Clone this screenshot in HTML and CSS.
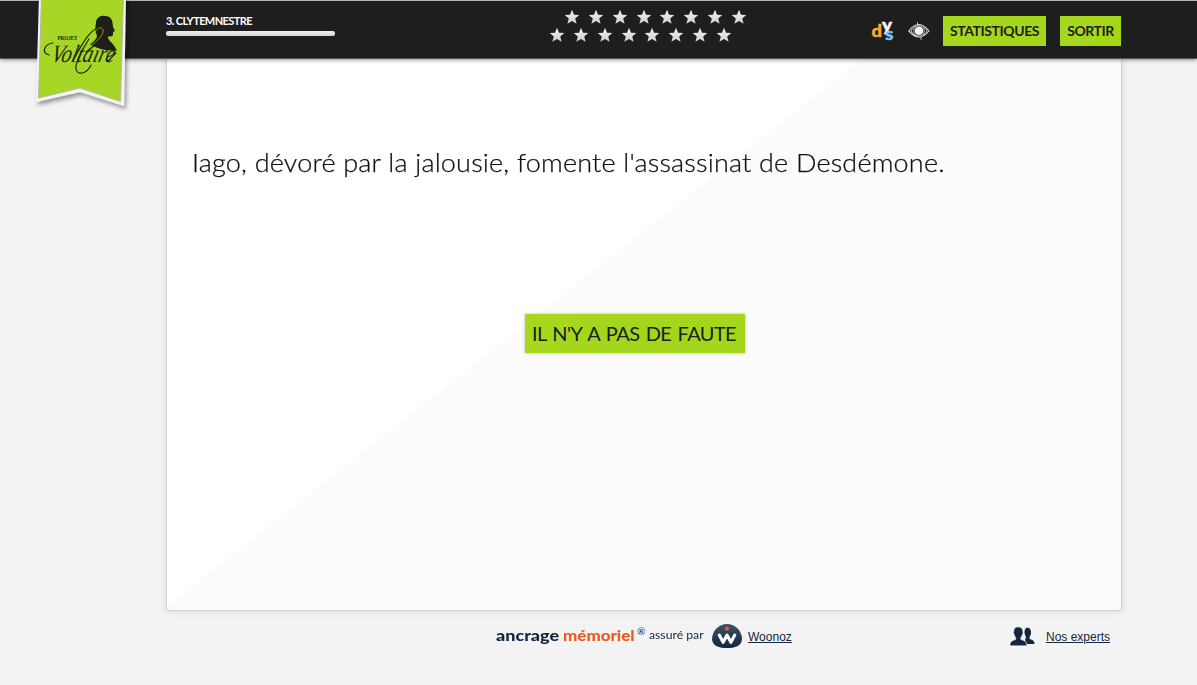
FILE: index.html
```html
<!DOCTYPE html>
<html lang="fr">
<head>
<meta charset="utf-8">
<title>Projet Voltaire</title>
<link rel="stylesheet" href="styles.css">
</head>
<body>
<svg class="defs" width="0" height="0" aria-hidden="true">
  <defs>
    <linearGradient id="silver" x1="0" y1="0" x2="0" y2="1"><stop offset="0" stop-color="#f2f2f2"/><stop offset="1" stop-color="#cfcfcf"/></linearGradient>
    <symbol id="star" viewBox="0 0 16 16"><path fill="url(#silver)" d="M8 .7 10 5.800 15.300 6.100 11.200 9.600 12.600 14.800 8 11.900 3.400 14.800 4.800 9.600 .7 6.100 6 5.800Z"/></symbol>
  </defs>
</svg>
<header class="topbar">
  <a class="brand" href="#" aria-label="Projet Voltaire">
    <svg width="102" height="114" viewBox="0 0 102 114">
      <defs>
        <pattern id="hatch" width="4" height="4" patternUnits="userSpaceOnUse"><path d="M-1 1 1 -1M0 4 4 0M3 5 5 3" stroke="#b7e04b" stroke-width=".8"/></pattern>
        <filter id="drop" x="-20%" y="-20%" width="140%" height="140%"><feDropShadow dx="2" dy="3" stdDeviation="2" flood-opacity=".4"/></filter>
      </defs>
      <path filter="url(#drop)" fill="#f4f4f4" d="M9-5H96L94 105 50 91 6 101Z"/>
      <path fill="#a2d512" stroke="#b4b8ae" d="M11.500-5H93.500L90.500 100.500 50 87 8.500 97Z"/>
      <path fill="url(#hatch)" d="M12-5H93L90 100 50 87 9 97Z"/>
      <path fill="#1d1f18" d="M66 22c0-5 4-8 9-7 5 0 7 3 7.500 7l.5 4 2 4-2 1v2c0 2-1 2.500-5 2.500-1 3 5 6 9 14-8 1-18-1-27-6 4-3 7-6 7-9-2-3-2-8-1-12.500Z"/>
      <text class="brand-small" x="27.500" y="38.500" textLength="20" lengthAdjust="spacingAndGlyphs">PROJET</text>
      <text class="brand-script" x="24" y="61" textLength="63" lengthAdjust="spacingAndGlyphs" transform="translate(11.500) skewX(-14)">Voltaire</text>
      <g fill="none" stroke="#1d2a0c" stroke-width="1.200" stroke-linecap="round">
        <path d="M19 54C11 52 14 43 23 42"/>
        <path d="M43 59C50 48 59 28 70 26c8 0 2 14-14 25"/>
        <path d="M59 38C53 48 45 60 46 68c1 7 11 5 15-4M78 60 86 52"/>
      </g>
      <path fill="none" stroke="#8fb320" stroke-width=".8" d="M65 31c2-3 4-5 6-4 6 2-1 12-12 19"/>
    </svg>
  </a>
  <div class="level">
    <div class="level-name">3. CLYTEMNESTRE</div>
    <div class="level-bar"></div>
  </div>
  <div class="stars">
    <div class="star-row star-row-top"><svg><use href="#star"/></svg><svg><use href="#star"/></svg><svg><use href="#star"/></svg><svg><use href="#star"/></svg><svg><use href="#star"/></svg><svg><use href="#star"/></svg><svg><use href="#star"/></svg><svg><use href="#star"/></svg></div>
    <div class="star-row"><svg><use href="#star"/></svg><svg><use href="#star"/></svg><svg><use href="#star"/></svg><svg><use href="#star"/></svg><svg><use href="#star"/></svg><svg><use href="#star"/></svg><svg><use href="#star"/></svg><svg><use href="#star"/></svg></div>
  </div>
  <nav class="tools">
    <svg class="dys" viewBox="0 0 24 24"><text x=".5" y="16" fill="#f6ae2d" stroke="#f6ae2d" textLength="10.500" lengthAdjust="spacingAndGlyphs">d</text><text x="11" y="9.500" fill="#fff" stroke="#fff" textLength="10" lengthAdjust="spacingAndGlyphs">y</text><text x="14" y="19" fill="#7cc4f5" stroke="#7cc4f5" textLength="8.500" lengthAdjust="spacingAndGlyphs">s</text></svg>
    <svg class="eye" viewBox="0 0 22 18"><g fill="none" stroke="#d8d8d8"><path d="M.8 9C5 3 8 2.500 11 2.500S17 4 21 9c-4 4.500-7 6-10 6S5 13.500.8 9Z" stroke-width="1.100"/><circle cx="11" cy="8.800" r="5.300" stroke-width=".8"/><path stroke-width=".9" d="M3 9c2-3 3-4 5-5M3 9c2 3 3 4 5 5M9.500 3V.2M13 15v2.800M19 9c-1-2-2-3-4-4M19 9c-1 2-2 3-4 4"/></g><circle cx="11" cy="8.800" r="4.300" fill="#f4f4f4"/></svg>
    <a class="btn btn-stats" href="#"><span>STATISTIQUES</span></a>
    <a class="btn btn-exit" href="#"><span>SORTIR</span></a>
  </nav>
</header>
<main class="card">
  <p class="sentence">Iago, dévoré par la jalousie, fomente l'assassinat de Desdémone.</p>
  <button class="btn btn-answer"><span>IL N'Y A PAS DE FAUTE</span></button>
</main>
<footer class="footer">
  <div class="anchor">
    <span class="ancrage">ancrage</span><span class="memoriel">mémoriel</span><span class="reg">®</span><span class="assure">assuré par</span>
    <svg class="woonoz-logo" viewBox="0 0 32 26"><defs><linearGradient id="navy" x1="0" y1="0" x2="0" y2="1"><stop offset="0" stop-color="#3d526c"/><stop offset="1" stop-color="#14253d"/></linearGradient></defs><path fill="url(#navy)" d="M15.500.5C24 .5 31 8 31 16c0 7-8 9.500-15.500 9.500S0 23 0 16C0 8 7 .5 15.500.5Z"/><path d="M7.500 12 11.500 19.500 15.500 12 19.500 19.500 23.500 12" fill="none" stroke="#fff" stroke-width="3.200" stroke-linejoin="round" stroke-linecap="round"/><circle cx="15.500" cy="5.500" r="2.200" fill="#ea5b20"/></svg>
    <a class="link link-woonoz" href="#">Woonoz</a>
  </div>
  <div class="experts">
    <svg class="people" viewBox="0 0 25 19"><g fill="#14263f"><path d="M16 1c3-1 5.500 1 5 5 0 2-1 3-1.500 4v2c3 1 5 1.500 5 5H17l-2-4 1-3c-2-3-2-7 0-9Z"/><path stroke="#f2f2f2" stroke-width=".5" d="M3.800 5C3.500 1.500 5.500 0 8.300 0s4.800 1.500 4.500 5c.5 1 0 2-.5 2.500-.3 1.500-1 2.500-1.500 3v2c3 1 6 1.500 6 6.200H0C0 14 3 13.500 5.800 12.500v-2c-.8-.6-1.300-1.500-1.500-3-.7-.5-1-1.500-.5-2.500Z"/></g></svg>
    <a class="link" href="#">Nos experts</a>
  </div>
</footer>
</body>
</html>
```
FILE: styles.css
```css
* { box-sizing: border-box; }
body {
  margin: 0;
  height: 685px;
  overflow: hidden;
  background: #f3f3f3;
  font-family: Lato, "Noto Sans", sans-serif;
}
.defs { position: absolute; }
.topbar {
  position: relative;
  z-index: 1;
  display: flex;
  align-items: flex-start;
  height: 59px;
  background: #1e1e1e;
  border-top: 1px solid #b3b7b3;
  border-bottom: 1px solid #555;
  box-shadow: 0 1px 4px rgba(0, 0, 0, .45);
}
.brand {
  position: absolute;
  left: 30px;
  top: 0;
}
.brand svg { display: block; overflow: visible; }
.brand-small { font: 700 7px "Liberation Serif", serif; fill: #1d2a0c; }
.brand-script { font: italic 25px "Liberation Serif", serif; fill: #1d2a0c; }
.level { width: 169px; margin: 13px 0 0 166px; }
.level-name {
  height: 15px;
  color: #fff;
  font-size: 11px;
  font-weight: 700;
  line-height: 13px;
  letter-spacing: -.6px;
  white-space: nowrap;
}
.level-bar {
  height: 5px;
  margin-top: 2px;
  border-radius: 2px;
  background: linear-gradient(#ececec, #d6d6d6);
}
.stars { margin: 8px 0 0 214px; }
.star-row { display: flex; gap: 7.860px; height: 18px; }
.star-row svg { width: 16px; height: 16px; }
.star-row-top { padding-left: 15px; }
.tools { display: flex; margin: 15px 0 0 auto; padding-right: 76px; }
.dys { width: 24px; height: 24px; margin-top: 5px; overflow: visible; }
.dys text { font: 900 16px Lato, sans-serif; stroke-width: .4px; }
.eye { width: 22px; height: 18px; margin: 6px 13px 0 13px; }
.btn {
  display: flex;
  align-items: center;
  justify-content: center;
  padding: 0;
  border: 0;
  color: #1d1d1b;
  background: repeating-linear-gradient(135deg, #a2d512 0 2.100px, #abda2b 2.100px 2.830px);
  font-family: Lato, "Noto Sans", sans-serif;
  text-decoration: none;
  white-space: nowrap;
}
.btn-stats, .btn-exit { height: 30px; padding-bottom: 2px; font-size: 14px; font-weight: 700; }
.btn-stats { width: 103px; margin-right: 14px; letter-spacing: -.4px; }
.btn-exit { width: 61px; letter-spacing: -.5px; }
.card {
  width: 956px;
  height: 553px;
  margin: -1px 0 0 166px;
  border: 1px solid #d2d2d2;
  background: linear-gradient(141.800deg, #fff 0 42%, #fbfbfb 42.100%);
  box-shadow: 0 0 7px rgba(0, 0, 0, .12);
}
.sentence {
  width: max-content;
  margin: 0 0 0 25px;
  padding-top: 88px;
  color: #111;
  font-size: 25.500px;
  font-weight: 300;
  line-height: 30px;
  letter-spacing: .180px;
  white-space: nowrap;
  transform: scaleX(1.059);
  transform-origin: left;
  -webkit-text-stroke: .25px #111;
}
.btn-answer {
  width: 220px;
  height: 39px;
  margin: 137px 0 0 358px;
  padding: 0 2px 2px 0;
  font-size: 20px;
  letter-spacing: -.6px;
  word-spacing: 1.800px;
  box-shadow: 0 0 3px rgba(0, 0, 0, .25);
}
.footer { display: flex; justify-content: space-between; padding: 12px 87px 0 496px; color: #14263f; }
.anchor, .experts { display: flex; height: 26px; align-items: flex-start; line-height: 20px; }
.anchor span { margin-top: 2px; white-space: nowrap; transform-origin: left; }
.ancrage, .memoriel { font-size: 15px; font-weight: 900; }
.ancrage { width: 67px; transform: scaleX(1.200); }
.memoriel { width: 74px; color: #ea5b20; transform: scaleX(1.130); }
.anchor .reg { width: 12px; margin-top: -2px; font-size: 10px; }
.assure { width: 63px; font-size: 11px; transform: scaleX(1.110); }
.woonoz-logo { width: 31px; height: 26px; }
.link {
  margin: 4px 0 0 4px;
  color: #14263f;
  font: 12px/20px "Liberation Sans", Arial, sans-serif;
}
.link-woonoz { margin-left: 5px; }
.people { width: 25px; height: 19px; margin: 4px 7px 0 0; }
```
